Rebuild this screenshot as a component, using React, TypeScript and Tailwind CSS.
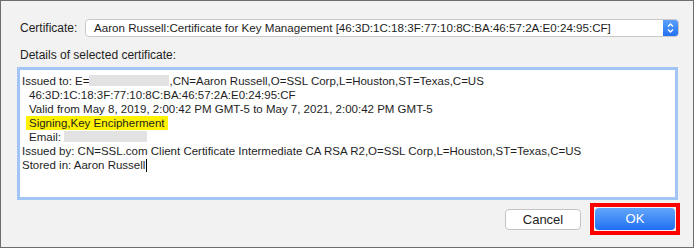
import React from 'react';

const font = { fontFamily: '"Liberation Sans", Arial, sans-serif' };

function Blur({ w }: { w: number }) {
  return <span className="inline-block h-[11px] align-[-1px] bg-[#e2e2e2]" style={{ width: w }} />;
}

export default function App() {
  return (
    <div className="w-[696px] h-[249px] bg-white" style={font}>
      <div className="w-[694px] h-[248px] border border-[#6e6e6e] bg-[#f2f2f2] flex flex-col pl-[16px] pr-[14px] text-[11.5px] text-[#1e1e1e]">
        {/* Certificate row */}
        <div className="flex items-center mt-[18px] h-[18px] text-[12px]">
          <span className="w-[68px] pl-[3px]">Certificate:</span>
          <div className="flex-1 flex h-[18px] rounded-[4px] border border-[#c9c9c9] bg-white overflow-hidden">
            <span className="flex-1 pl-[8px] leading-[16px] text-[11.6px] whitespace-nowrap overflow-hidden">
              Aaron Russell:Certificate for Key Management [46:3D:1C:18:3F:77:10:8C:BA:46:57:2A:E0:24:95:CF]
            </span>
            <div className="w-[15px] bg-gradient-to-b from-[#5a9ffb] to-[#2471f3] flex items-center justify-center">
              <svg width="9" height="12" viewBox="0 0 9 12" fill="none" stroke="white" strokeWidth="1.4">
                <path d="M2 4.5 L4.5 2 L7 4.5" />
                <path d="M2 7.5 L4.5 10 L7 7.5" />
              </svg>
            </div>
          </div>
        </div>

        {/* Details label */}
        <div className="mt-[11px] pl-[3px] leading-[14px] text-[12px]">Details of selected certificate:</div>

        {/* Details box */}
        <div className="mt-[5px] w-[661px] h-[133px] border-[3px] border-[#a2c5f6] bg-white pl-[2px] pt-[4px] leading-[14px] whitespace-nowrap">
          <div>
            Issued to: E=<Blur w={80} />,CN=Aaron Russell,O=SSL Corp,L=Houston,ST=Texas,C=US
          </div>
          <div className="pl-[7px]">46:3D:1C:18:3F:77:10:8C:BA:46:57:2A:E0:24:95:CF</div>
          <div className="pl-[7px]">Valid from May 8, 2019, 2:00:42 PM GMT-5 to May 7, 2021, 2:00:42 PM GMT-5</div>
          <div className="pl-[4px]">
            <span className="bg-[#fff200] px-[3px] inline-block">Signing,Key Encipherment</span>
          </div>
          <div className="pl-[7px]">
            Email: <Blur w={83} />
          </div>
          <div>Issued by: CN=SSL.com Client Certificate Intermediate CA RSA R2,O=SSL Corp,L=Houston,ST=Texas,C=US</div>
          <div className="flex items-center">
            Stored in: Aaron Russell
            <span className="inline-block w-px h-[13px] bg-black ml-[1px]" />
          </div>
        </div>

        {/* Buttons */}
        <div className="flex justify-end items-center mt-[3px] mr-[-1px]">
          <button className="w-[76px] h-[21px] mr-[9px] rounded-[4px] border border-[#c4c4c4] bg-white text-[13px] text-[#1e1e1e] leading-[19px]">
            Cancel
          </button>
          <div className="border-[4px] border-[#ff0000] p-[1px]">
            <button className="w-[80px] h-[22px] rounded-[4px] bg-gradient-to-b from-[#62a6fb] to-[#1f6ef2] text-white text-[13px] leading-[22px]">
              OK
            </button>
          </div>
        </div>
      </div>
    </div>
  );
}
